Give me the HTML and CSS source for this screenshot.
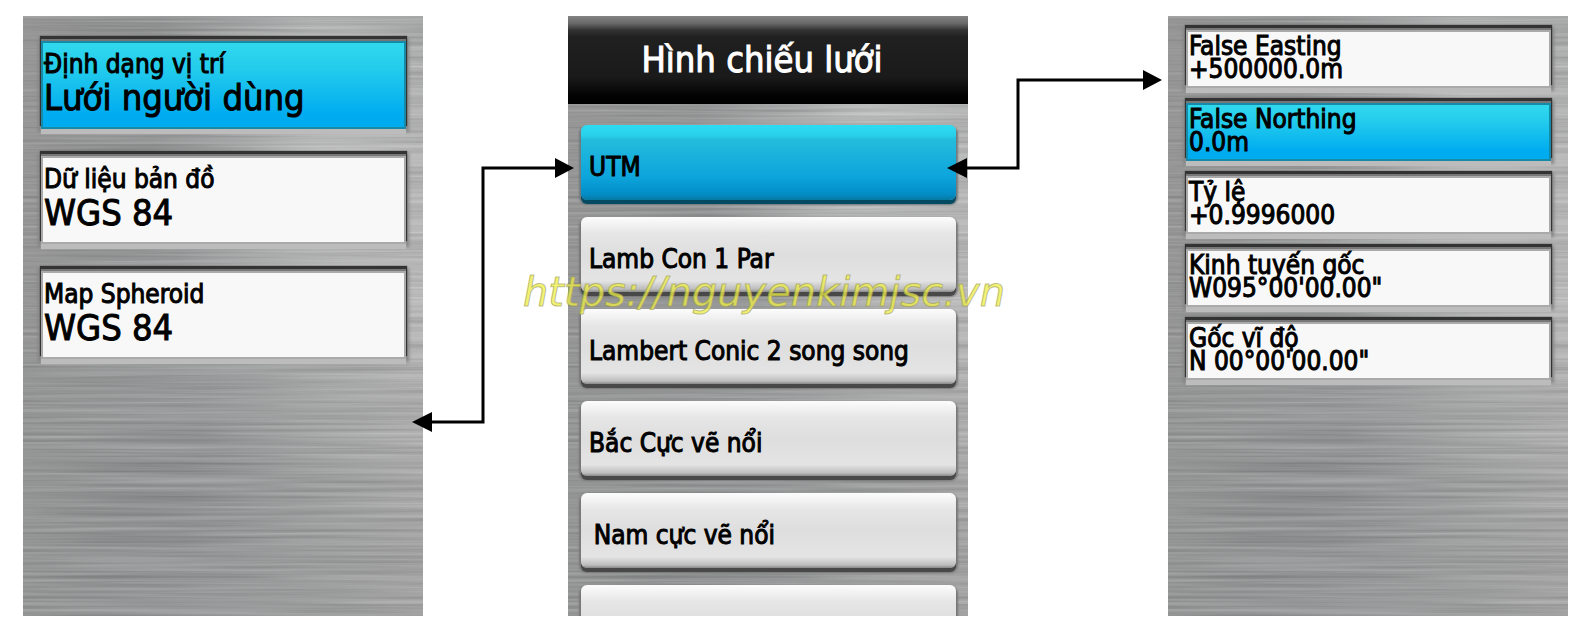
FILE: index.html
```
<!DOCTYPE html>
<html lang="vi">
<head>
    <meta charset="UTF-8">
    <meta name="viewport" content="width=device-width, initial-scale=1.0">
    <title>Hình chiếu lưới</title>
    <link rel="stylesheet" href="styles.css">
</head>
<body>
    <main class="flow">
        <section class="screen fields">
            <button type="button" class="field active">
                <span class="label">Định dạng vị trí</span>
                <span class="value">Lưới người dùng</span>
            </button>
            <button type="button" class="field">
                <span class="label">Dữ liệu bản đồ</span>
                <span class="value">WGS 84</span>
            </button>
            <button type="button" class="field">
                <span class="label">Map Spheroid</span>
                <span class="value">WGS 84</span>
            </button>
        </section>

        <svg class="connector" viewBox="0 0 145 600" aria-hidden="true">
            <path class="line" d="M8 406H60V152H134"/>
            <path d="M-11 406L9 396V416ZM151 152L132 142V162Z"/>
        </svg>

        <div class="center">
            <section class="screen menu">
                <h1>Hình chiếu lưới</h1>
                <div class="options">
                    <button type="button" class="option active">UTM</button>
                    <button type="button" class="option">Lamb Con 1 Par</button>
                    <button type="button" class="option">Lambert Conic 2 song song</button>
                    <button type="button" class="option">Bắc Cực vẽ nổi</button>
                    <button type="button" class="option">&thinsp;Nam cực vẽ nổi</button>
                    <button type="button" class="option" aria-label="Khác"></button>
                </div>
            </section>
            <p class="watermark">https://nguyenkimjsc.vn</p>
        </div>

        <svg class="connector" viewBox="0 0 200 600" aria-hidden="true">
            <path class="line" d="M-2 152H50V64H176"/>
            <path d="M-21 152L-1 142V162ZM194 64L175 54V74Z"/>
        </svg>

        <section class="screen fields compact">
            <button type="button" class="field">
                <span class="label">False Easting</span>
                <span class="value">+500000.0m</span>
            </button>
            <button type="button" class="field active">
                <span class="label">False Northing</span>
                <span class="value">0.0m</span>
            </button>
            <button type="button" class="field">
                <span class="label">Tỷ lệ</span>
                <span class="value">+0.9996000</span>
            </button>
            <button type="button" class="field">
                <span class="label">Kinh tuyến gốc</span>
                <span class="value">W095°00'00.00"</span>
            </button>
            <button type="button" class="field">
                <span class="label">Gốc vĩ độ</span>
                <span class="value">N 00°00'00.00"</span>
            </button>
        </section>
    </main>
</body>
</html>
```

FILE: styles.css
```
* {
    box-sizing: border-box;
    margin: 0;
    padding: 0;
}

body {
    font-family: "DejaVu Sans Condensed", "DejaVu Sans", sans-serif;
    background-color: #fff;
    color: #000;
}

.flow {
    display: grid;
    grid-template-columns: 400fr 145fr 400fr 200fr 400fr;
    padding: 16px 13px 16px 23px;
}

/* brushed metal */
.screen {
    aspect-ratio: 2 / 3;
    min-width: 0;
    overflow: hidden;
    background-color: #9b9c9d;
    background-image:
        url("data:image/svg+xml,%3Csvg xmlns='http://www.w3.org/2000/svg' width='400' height='600'%3E%3Cfilter id='b' x='0' y='0' width='100%25' height='100%25' color-interpolation-filters='sRGB'%3E%3CfeTurbulence type='fractalNoise' baseFrequency='.004 .3' numOctaves='3' seed='4'/%3E%3CfeColorMatrix values='1 0 0 0 0 1 0 0 0 0 1 0 0 0 0 0 0 0 0 .2'/%3E%3C/filter%3E%3Crect width='400' height='600' filter='url(%23b)'/%3E%3C/svg%3E"),
        radial-gradient(ellipse at 100% 45%, rgba(215, 215, 215, 0.6), transparent 50%),
        radial-gradient(ellipse at 75% 14%, rgba(225, 225, 225, 0.6), transparent 40%),
        linear-gradient(100deg, #9c9c9c 0%, #989a9b 50%, #aeaeae 100%);
}

button {
    font-family: inherit;
    color: #000;
    text-align: left;
    border: none;
    cursor: pointer;
}

.fields {
    display: flex;
    flex-direction: column;
    gap: 27px;
    padding: 25px 17px 0 18px;
}

.field {
    display: flex;
    flex-direction: column;
    height: 88px;
    flex-shrink: 0;
    padding: 6px 1px 0;
    border: 2px solid #aaa;
    background-color: #f8f8f8;
    box-shadow:
        0 -2px 0 #777,
        0 -4px 1px 1px #333,
        0 5px 1px #bcbcbc,
        0 0 3px 3px #858585;
}

.field.active {
    border-color: #168aa6;
    background: linear-gradient(#30d8ee, #24ccec 30%, #00acf0 85%);
}

.label {
    font-size: 26px;
    line-height: 30px;
    white-space: nowrap;
    -webkit-text-stroke: 1px currentColor;
}

.value {
    font-size: 36px;
    line-height: 38px;
    white-space: nowrap;
    -webkit-text-stroke: 1px currentColor;
}

.compact {
    gap: 15px;
    padding-top: 14px;
}

.compact .field {
    height: 58px;
    padding-top: 3px;
}

.compact .label,
.compact .value {
    font-size: 26px;
    line-height: 23px;
}

.connector {
    width: 100%;
    overflow: visible;
    z-index: 1;
}

.line {
    fill: none;
    stroke: #000;
    stroke-width: 3;
}

.center {
    position: relative;
    min-width: 0;
}

.menu h1 {
    height: 88px;
    color: #fff;
    font-size: 36px;
    font-weight: normal;
    line-height: 88px;
    text-align: center;
    padding-right: 12px;
    -webkit-text-stroke: 1px currentColor;
    background: linear-gradient(#848484, #6a6a6a 8%, #333 16%, #202020 24%, #1a1a1a 70%, #030303 90%, #000);
}

.options {
    display: flex;
    flex-direction: column;
    gap: 17px;
    padding: 21px 12px 0 13px;
}

.option {
    height: 75px;
    flex-shrink: 0;
    padding: 9px 8px 0;
    border-radius: 6px;
    font-size: 26px;
    white-space: nowrap;
    -webkit-text-stroke: 1px currentColor;
    background: linear-gradient(#fcfcfc, #e6e6e6 22%, #dedede 50%, #e4e4e4 85%, #bdbdbd 96%, #888);
    box-shadow: 0 4px 0 #484848, 0 3px 2px 2px #777;
}

.option.active {
    background: linear-gradient(#2ddcf2, #29d0ea 14%, #24bcdc 20%, #0ca4dc 70%, #038dc6 92%, #0679a3);
    box-shadow: 0 4px 0 #044a62, 0 3px 2px 2px #6f7a7d;
}

.watermark {
    position: absolute;
    top: 252px;
    left: -45px;
    z-index: 2;
    font-family: "DejaVu Sans", sans-serif;
    font-size: 40px;
    font-style: italic;
    line-height: 48px;
    white-space: nowrap;
    color: rgba(238, 238, 70, 0.75);
    -webkit-text-stroke: 1px rgba(150, 150, 90, 0.6);
}
```
